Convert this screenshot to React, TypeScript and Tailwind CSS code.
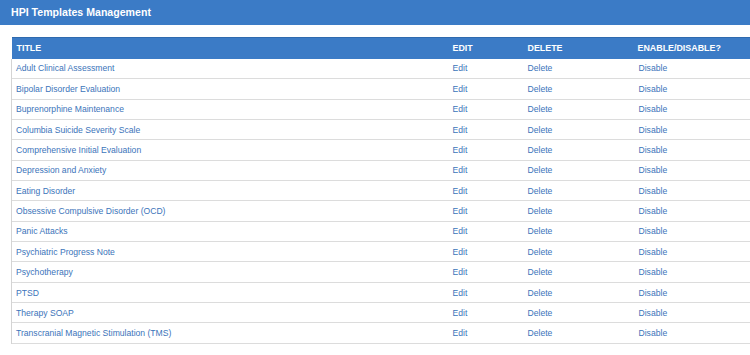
const templates = [
  "Adult Clinical Assessment",
  "Bipolar Disorder Evaluation",
  "Buprenorphine Maintenance",
  "Columbia Suicide Severity Scale",
  "Comprehensive Initial Evaluation",
  "Depression and Anxiety",
  "Eating Disorder",
  "Obsessive Compulsive Disorder (OCD)",
  "Panic Attacks",
  "Psychiatric Progress Note",
  "Psychotherapy",
  "PTSD",
  "Therapy SOAP",
  "Transcranial Magnetic Stimulation (TMS)",
];

export default function App() {
  return (
    <div className="w-[750px] h-[355px] bg-white overflow-hidden font-['Liberation_Sans',Arial,sans-serif]">
      <div className="h-[25px] bg-[#3b7bc6] flex items-center pl-[11px] pt-[1px] text-white font-bold text-[10.6px]">
        HPI Templates Management
      </div>
      <div className="pt-[12px] pl-[11px] overflow-hidden">
        <table className="w-[760px] border-collapse text-[8.6px] table-fixed">
          <colgroup>
            <col className="w-[436px]" />
            <col className="w-[75px]" />
            <col className="w-[111px]" />
            <col />
          </colgroup>
          <thead>
            <tr className="h-[21px] bg-[#3b7bc6] text-white text-left text-[8.9px] border-t border-[#2f6aae]">
              <th className="pl-[5px] font-bold">TITLE</th>
              <th className="pl-[5px] font-bold">EDIT</th>
              <th className="pl-[5px] font-bold">DELETE</th>
              <th className="pl-[4px] font-bold">ENABLE/DISABLE?</th>
            </tr>
          </thead>
          <tbody>
            {templates.map((t) => (
              <tr key={t} className="h-[20.35px] border-b border-[#dcdcdc] text-[#3b74ba]">
                <td className="pl-[4px] pt-[1px] border-l border-[#d4d4d4]">{t}</td>
                <td className="pl-[5px] pt-[1px]">Edit</td>
                <td className="pl-[5px] pt-[1px]">Delete</td>
                <td className="pl-[5px] pt-[1px]">Disable</td>
              </tr>
            ))}
          </tbody>
        </table>
      </div>
    </div>
  );
}
